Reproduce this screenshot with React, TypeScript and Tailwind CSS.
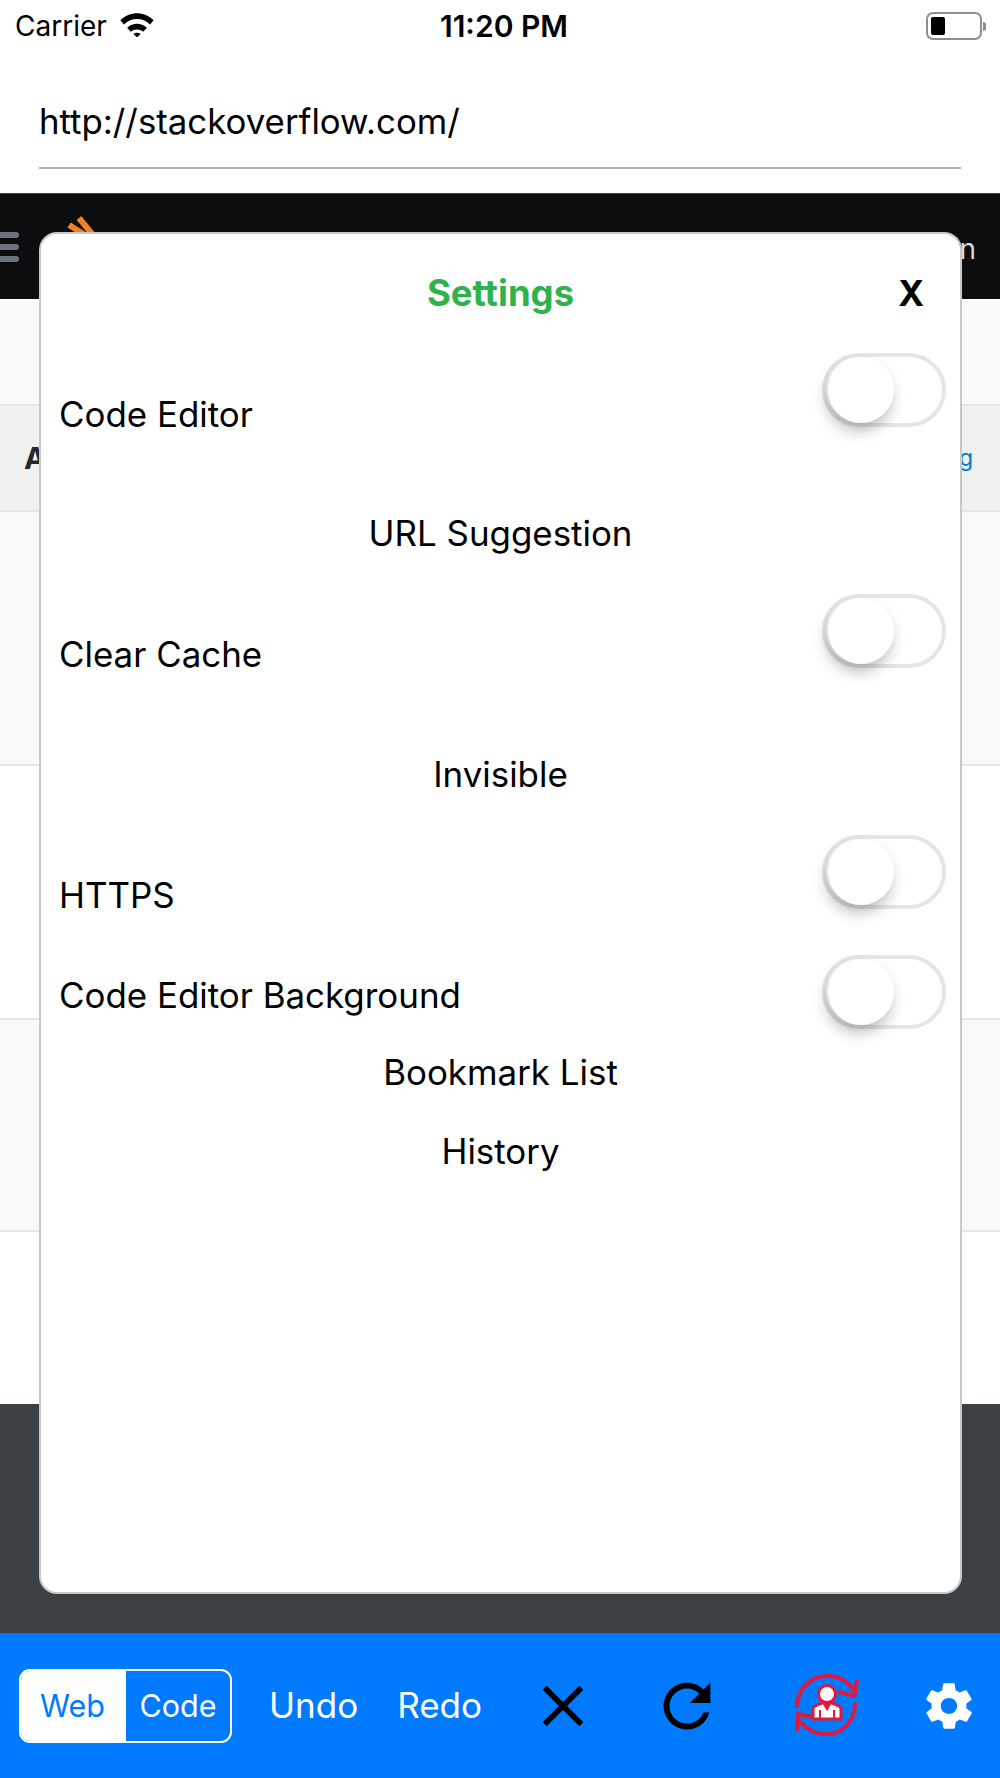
import { IoMdClose, IoMdRefresh, IoMdSettings } from "react-icons/io";

const FONT = "font-['Inter','Liberation_Sans',sans-serif]";

// Toggle drawn in its off state, knob sits on the left of the track
const Toggle = () => (
  <div className="relative h-[74px] w-[124px] shrink-0 rounded-full border-[4px] border-[#e5e5e5] bg-white">
    <div className="absolute left-[2px] top-0 h-[66px] w-[66px] rounded-full bg-white shadow-[-2px_8px_14px_rgba(0,0,0,0.25)]" />
  </div>
);

const SettingRow = ({ label, labelTop, className }: { label: string; labelTop: string; className: string }) => (
  <div className={`flex justify-between pl-[18px] pr-[14px] ${className}`}>
    <span className={labelTop}>{label}</span>
    <Toggle />
  </div>
);

const SyncUserIcon = () => (
  <svg width="66" height="64" viewBox="0 0 66 64" fill="none" className="text-[#e2173c]">
    <path d="M2 32 C3 14 16 2 32 2 C44 2 54 8 60 18" stroke="currentColor" strokeWidth="4" strokeLinecap="round" />
    <path d="M62 7 L59 22 L45 18" stroke="currentColor" strokeWidth="4" strokeLinecap="round" strokeLinejoin="round" />
    <path d="M60 30 C60 47 47 60 32 60 C21 60 11 55 5 47" stroke="currentColor" strokeWidth="4" strokeLinecap="round" />
    <path d="M2 55 L3 40 L18 43" stroke="currentColor" strokeWidth="4" strokeLinecap="round" strokeLinejoin="round" />
    <circle cx="32" cy="20" r="8.5" fill="white" stroke="currentColor" strokeWidth="3" />
    <path d="M18 45 V35 C18 32 23 31 27 29 H37 C41 31 46 32 46 35 V45 Z" fill="white" stroke="currentColor" strokeWidth="3" />
    <path d="M25 36 V44 M39 36 V44 M29 30 L32 35 L35 30 Z" stroke="currentColor" strokeWidth="2" fill="currentColor" />
  </svg>
);

export default function App() {
  return (
    <div className={`relative flex h-[1778px] w-[1000px] flex-col overflow-hidden bg-white text-black ${FONT}`}>
      {/* Status bar */}
      <div className="flex h-[52px] items-center justify-between pl-[15px] pr-[14px]">
        <div className="flex w-[177px] items-center gap-[12px] text-[28px]">
          <span>Carrier</span>
          <svg width="36" height="25" viewBox="0 0 34 24" className="mb-[3px]">
            <path d="M1 8 C10 -1 24 -1 33 8 L29.5 12 C22 5 12 5 4.5 12 Z" fill="black" />
            <path d="M7.5 15 C13 10 21 10 26.5 15 L23 19 C19.5 16 14.5 16 11 19 Z" fill="black" />
            <path d="M13.5 21 C15.5 19.5 18.5 19.5 20.5 21 L17 24.5 Z" fill="black" />
          </svg>
        </div>
        <span className="text-[30px] font-semibold">11:20 PM</span>
        <div className="flex w-[170px] items-center justify-end gap-[1px]">
          <div className="h-[28px] w-[56px] rounded-[7px] border-[2px] border-[#8e8e8e] p-[3px]">
            <div className="h-full w-[14px] rounded-[2px] bg-black" />
          </div>
          <div className="h-[9px] w-[3px] rounded-r-full bg-[#8e8e8e]" />
        </div>
      </div>

      {/* URL field */}
      <div className="h-[141px] px-[39px] pt-[44px]">
        <div className="h-[73px] border-b-2 border-[#b2b2b2] text-[34.8px] leading-[50px]">http://stackoverflow.com/</div>
      </div>

      {/* Page loaded in the web view, mostly hidden by the modal */}
      <div className="flex flex-1 flex-col">
        <div className="flex h-[106px] items-center justify-between border-t border-[#3c4146] bg-[#0c0d0e]">
          <div className="flex items-center gap-[32px]">
            <div className="flex w-[19px] flex-col gap-[6px]">
              <div className="h-[6px] rounded-r-full bg-[#6a737c]" />
              <div className="h-[6px] rounded-r-full bg-[#6a737c]" />
              <div className="h-[6px] rounded-r-full bg-[#6a737c]" />
            </div>
            <svg width="44" height="56" viewBox="0 0 44 56" className="mb-[8px]">
              <path d="M18 10 L34 20" stroke="#f48024" strokeWidth="6" />
              <path d="M28 3 L42 20" stroke="#f48024" strokeWidth="6" />
            </svg>
          </div>
          <span className="mt-[4px] pr-[24px] text-[28px] text-[#d6d9dc]">Log in</span>
        </div>
        <div className="h-[107px] border-b-2 border-[#e4e6e8] bg-[#fafafb]" />
        <div className="flex h-[106px] items-center justify-between border-b-2 border-[#e4e6e8] bg-[#eff0f1] pl-[24px] pr-[27px]">
          <span className="text-[30px] font-bold text-[#242729]">All Questions</span>
          <span className="text-[23px] text-[#0077cc]">Sorting</span>
        </div>
        <div className="h-[254px] border-b-2 border-[#e4e6e8] bg-[#f8f9f9]" />
        <div className="h-[254px] border-b-2 border-[#e4e6e8] bg-white" />
        <div className="h-[212px] border-b-2 border-[#e4e6e8] bg-[#f8f9f9]" />
        <div className="h-[172px] bg-white" />
        <div className="flex-1 bg-[#3b4045]" />
      </div>

      {/* Bottom toolbar */}
      <div className="flex h-[145px] items-center bg-[#007aff] pl-[19px] text-white">
        <div className="flex h-[74px] w-[213px] shrink-0 overflow-hidden rounded-[11px] border-[2px] border-white text-[30.5px]">
          <div className="flex w-[105px] items-center justify-center bg-white pr-[2px] text-[#007aff]">Web</div>
          <div className="flex flex-1 items-center justify-center">Code</div>
        </div>
        <span className="ml-[37px] text-[35px]">Undo</span>
        <span className="ml-[39px] text-[35px]">Redo</span>
        <IoMdClose className="ml-[46px] shrink-0 text-black" size={70} />
        <IoMdRefresh className="ml-[55px] shrink-0 text-black" size={68} />
        <div className="ml-[74px] shrink-0"><SyncUserIcon /></div>
        <IoMdSettings className="ml-[60px] shrink-0" size={56} />
      </div>

      {/* Settings modal */}
      <div className="absolute left-[39px] top-[232px] flex h-[1362px] w-[923px] flex-col rounded-[18px] border-2 border-[#c8c8c8] bg-white text-[34.9px] leading-[42px]">
        <div className="mt-[38px] grid grid-cols-[1fr_auto_1fr] items-center px-[36px]">
          <span />
          <span className="text-[36.5px] font-bold text-[#2fb24c]">Settings</span>
          <span className="justify-self-end text-[35px] font-bold">X</span>
        </div>
        <SettingRow label="Code Editor" labelTop="mt-[40px]" className="mt-[39px]" />
        <div className="mt-[77px] text-center">URL Suggestion</div>
        <SettingRow label="Clear Cache" labelTop="mt-[39px]" className="mt-[40px]" />
        <div className="mt-[78px] text-center">Invisible</div>
        <SettingRow label="HTTPS" labelTop="mt-[39px]" className="mt-[40px]" />
        <SettingRow label="Code Editor Background" labelTop="mt-[19px]" className="mt-[39px]" />
        <div className="mt-[22px] text-center">Bookmark List</div>
        <div className="mt-[37px] text-center">History</div>
      </div>
    </div>
  );
}
